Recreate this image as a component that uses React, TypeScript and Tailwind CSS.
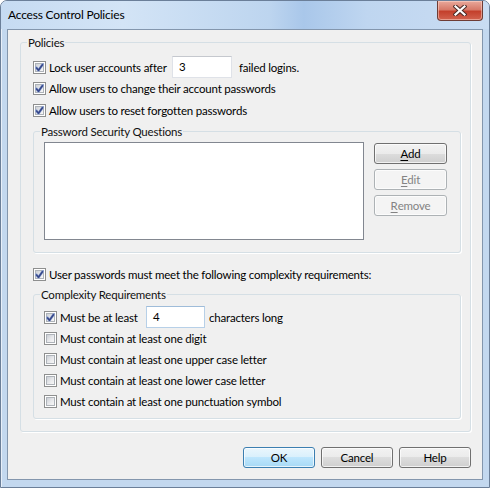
import type { ReactNode } from 'react';

type BtnKind = 'normal' | 'default' | 'disabled';

function CheckBox({ checked }: { checked?: boolean }) {
  return (
    <span className="flex h-[13px] w-[13px] shrink-0 items-center justify-center border border-[#8e8f8f] bg-white">
      <span className="flex h-[9px] w-[9px] items-center justify-center border border-[#aeb3b9] bg-[linear-gradient(135deg,#cbcfd5_0%,#e6e7ea_50%,#f7f7f7_100%)]">
        {checked && (
          <svg width="9" height="9" viewBox="0 0 9 9" className="shrink-0">
            <path d="M1.2 4.6 L3.5 7.3 L7.8 1.2" fill="none" stroke="#8fa3cf" strokeWidth="2.6" strokeLinecap="round" strokeLinejoin="round" />
            <path d="M1.2 4.6 L3.5 7.3 L7.8 1.2" fill="none" stroke="#36478a" strokeWidth="1.5" strokeLinejoin="round" />
          </svg>
        )}
      </span>
    </span>
  );
}

function CheckRow({ checked, label, className = '' }: { checked?: boolean; label: string; className?: string }) {
  return (
    <div className={`flex h-[15px] items-center ${className}`}>
      <CheckBox checked={checked} />
      <span className="ml-[3px] whitespace-nowrap leading-[15px]">{label}</span>
    </div>
  );
}

function TextBox({ value, width, focus }: { value: string; width: string; focus?: boolean }) {
  return (
    <div
      className={`flex h-[22px] items-center bg-white pb-[1px] pl-[6px] ${width} ${
        focus ? 'border border-[#b7d0e8] border-t-[#9fbcd9]' : 'border border-[#dfe2e8] border-t-[#c5c8ce]'
      }`}
    >
      {value}
    </div>
  );
}

function Btn({ kind = 'normal', children, width = 'w-[72px]' }: { kind?: BtnKind; children: ReactNode; width?: string }) {
  const styles: Record<BtnKind, string> = {
    normal:
      'border-[#707070] bg-[linear-gradient(#f2f2f2_0%,#ebebeb_50%,#dddddd_50%,#cfcfcf_100%)] text-black',
    default:
      'border-[#3c7fb1] bg-[linear-gradient(#eaf6fd_0%,#d9f0fc_50%,#bee6fd_50%,#a7d9f5_100%)] text-black',
    disabled: 'border-[#adb2b5] bg-[#f4f4f4] text-[#838383]',
  };
  return (
    <div
      className={`flex h-[21px] ${width} items-center justify-center rounded-[3px] border pb-[1px] leading-[15px] shadow-[inset_0_0_0_1px_rgba(255,255,255,0.7)] ${styles[kind]}`}
    >
      {children}
    </div>
  );
}

function Group({ title, className = '', children }: { title: string; className?: string; children: ReactNode }) {
  return (
    <fieldset className={`rounded-[3px] border border-[#d5dfe5] shadow-[1px_1px_0_#ffffff] ${className}`}>
      <legend className="ml-[6px] px-[1px] leading-[15px] text-[#111]">{title}</legend>
      {children}
    </fieldset>
  );
}

export default function App() {
  return (
    <div className="flex h-[488px] w-[490px] flex-col rounded-t-[7px] border border-[#6b7f99] bg-[#c3d8ef] font-['Lato',sans-serif] text-[11.5px] tracking-[-0.2px] text-black shadow-[inset_1px_1px_0_rgba(255,255,255,0.6)]">
      {/* title bar */}
      <div className="flex h-[28px] items-start justify-between rounded-t-[6px] bg-[linear-gradient(90deg,#c6dbf2_0%,#d3e4f6_25%,#bdd5ef_55%,#a9c7ea_62%,#bfd6f0_75%,#c9dcf2_100%)]">
        <span className="pl-[7px] pt-[6px] text-[12px] leading-[15px] text-black">Access Control Policies</span>
        <div className="mr-[6px] flex h-[20px] w-[46px] items-center justify-center rounded-b-[4px] border border-t-0 border-[#6e3c35] bg-[linear-gradient(#e9a99b_0%,#d77a69_45%,#c4402c_55%,#d2634f_100%)] shadow-[inset_0_0_0_1px_rgba(255,220,210,0.5)]">
          <svg width="14" height="11" viewBox="0 0 14 11">
            <path d="M2.5 1.5 L11.5 9.5 M11.5 1.5 L2.5 9.5" stroke="#4a2a26" strokeWidth="4.2" strokeLinecap="square" />
            <path d="M2.5 1.5 L11.5 9.5 M11.5 1.5 L2.5 9.5" stroke="#ffffff" strokeWidth="2.2" strokeLinecap="square" />
          </svg>
        </div>
      </div>

      {/* client area */}
      <div className="mx-[6px] mb-[7px] flex flex-1 flex-col border border-[#8396ad] bg-[#f0f0f0] pb-[11px] pl-[12px] pr-[11px] pt-[5px]">
        <Group title="Policies">
          <div className="pb-[12px] pl-[12px] pr-[9px] pt-[6px]">
            <div className="flex h-[22px] items-center">
              <div className="flex w-[139px] items-center">
                <CheckBox checked />
                <span className="ml-[3px] whitespace-nowrap leading-[15px]">Lock user accounts after</span>
              </div>
              <TextBox value="3" width="w-[60px]" />
              <span className="ml-[7px] leading-[15px]">failed logins.</span>
            </div>
            <CheckRow checked label="Allow users to change their account passwords" className="mt-[3px]" />
            <CheckRow checked label="Allow users to reset forgotten passwords" className="mt-[7px]" />

            <Group title="Password Security Questions" className="mt-[6px]">
              <div className="flex pb-[12px] pl-[10px] pt-[3px]">
                <div className="h-[98px] w-[320px] border border-[#828790] bg-white" />
                <div className="ml-[10px] flex flex-col gap-[5px] pt-[1px]">
                  <Btn width="w-[73px]">
                    <span className="underline decoration-1 underline-offset-2">A</span>dd
                  </Btn>
                  <Btn kind="disabled" width="w-[73px]">
                    <span className="underline decoration-1 underline-offset-2">E</span>dit
                  </Btn>
                  <Btn kind="disabled" width="w-[73px]">
                    <span className="underline decoration-1 underline-offset-2">R</span>emove
                  </Btn>
                </div>
              </div>
            </Group>

            <CheckRow checked label="User passwords must meet the following complexity requirements:" className="mt-[14px]" />

            <Group title="Complexity Requirements" className="mt-[5px]">
              <div className="pb-[9px] pl-[10px] pt-[4px]">
                <div className="flex h-[22px] items-center">
                  <div className="flex w-[102px] items-center">
                    <CheckBox checked />
                    <span className="ml-[3px] whitespace-nowrap leading-[15px]">Must be at least</span>
                  </div>
                  <TextBox value="4" width="w-[59px]" focus />
                  <span className="ml-[4px] leading-[15px]">characters long</span>
                </div>
                <CheckRow label="Must contain at least one digit" className="mt-[3px]" />
                <CheckRow label="Must contain at least one upper case letter" className="mt-[6px]" />
                <CheckRow label="Must contain at least one lower case letter" className="mt-[6px]" />
                <CheckRow label="Must contain at least one punctuation symbol" className="mt-[6px]" />
              </div>
            </Group>
          </div>
        </Group>

        <div className="mt-[15px] flex justify-end gap-[6px]">
          <Btn kind="default">OK</Btn>
          <Btn>Cancel</Btn>
          <Btn>Help</Btn>
        </div>
      </div>
    </div>
  );
}
